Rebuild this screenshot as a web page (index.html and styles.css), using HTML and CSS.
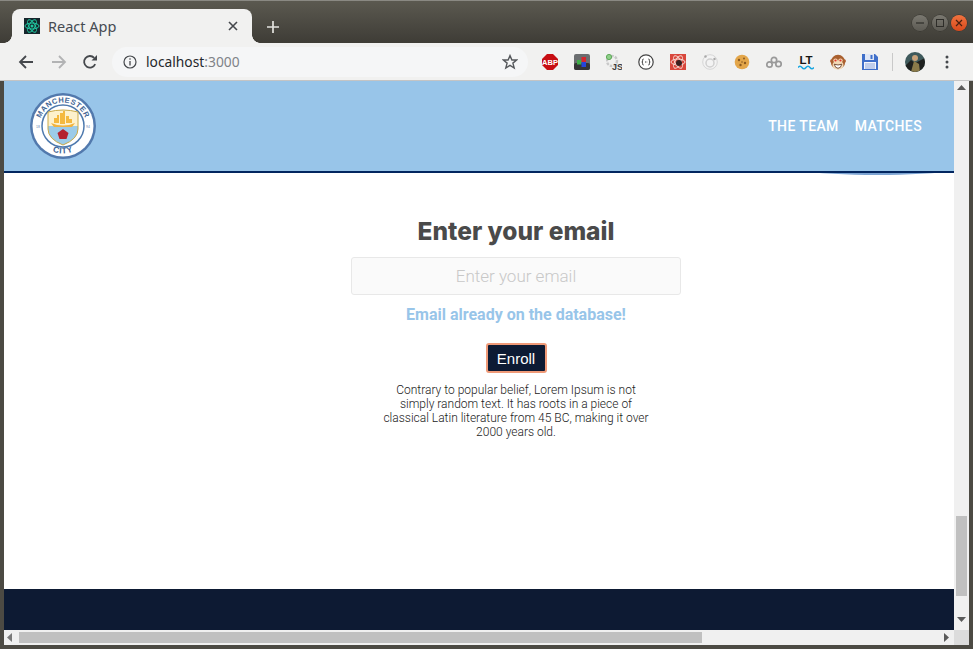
FILE: index.html
```html
<!DOCTYPE html>
<html lang="en">
<head>
<meta charset="utf-8">
<title>React App</title>
<link rel="stylesheet" href="styles.css">
</head>
<body>
<div class="window">
  <div class="titlebar">
    <div class="tab">
      <svg class="favicon" width="16" height="16" viewBox="0 0 16 16"><rect width="16" height="16" fill="#16262c"/><g fill="none" stroke="#1fc7a0" stroke-width="1"><ellipse cx="8" cy="8" rx="7" ry="3"/><ellipse cx="8" cy="8" rx="7" ry="3" transform="rotate(60 8 8)"/><ellipse cx="8" cy="8" rx="7" ry="3" transform="rotate(120 8 8)"/></g><circle cx="8" cy="8" r="1.5" fill="#1fc7a0"/></svg>
      <span class="tab-title">React App</span>
      <svg class="tab-close" width="10" height="10" viewBox="0 0 10 10"><path d="M1 1L9 9M9 1L1 9" stroke="#45484c" stroke-width="1.6"/></svg>
    </div>
    <svg class="new-tab" width="12" height="12" viewBox="0 0 12 12"><path d="M6 0V12M0 6H12" stroke="#e4e3df" stroke-width="1.7"/></svg>
    <div class="win-buttons">
      <span class="win-btn"><svg width="16" height="16" viewBox="0 0 16 16"><path d="M4 8H12" stroke="#2e2d29" stroke-width="1.2"/></svg></span>
      <span class="win-btn"><svg width="16" height="16" viewBox="0 0 16 16"><rect x="4.5" y="4.5" width="7" height="7" fill="none" stroke="#2e2d29"/></svg></span>
      <span class="win-btn win-close"><svg width="16" height="16" viewBox="0 0 16 16"><path d="M5 5L11 11M11 5L5 11" stroke="#4a2010" stroke-width="1.2"/></svg></span>
    </div>
  </div>

  <div class="toolbar">
    <svg class="nav-icon nav-back" width="16" height="16" viewBox="0 0 16 16"><path d="M15 8H2M8 2L2 8L8 14" fill="none" stroke="#45484c" stroke-width="1.8"/></svg>
    <svg class="nav-icon nav-forward" width="16" height="16" viewBox="0 0 16 16"><path d="M1 8H14M8 2L14 8L8 14" fill="none" stroke="#b2b3b4" stroke-width="1.8"/></svg>
    <svg class="nav-icon" width="16" height="16" viewBox="0 0 16 16"><path d="M13.2 10.2A5.8 5.8 0 1 1 12.2 3.9" fill="none" stroke="#45484c" stroke-width="1.8"/><path d="M9.5 6.6H15V1Z" fill="#45484c"/></svg>
    <div class="omnibox">
      <svg class="info" width="14" height="14" viewBox="0 0 14 14"><circle cx="7" cy="7" r="6" fill="none" stroke="#45484c" stroke-width="1.2"/><path d="M7 6V10.5" stroke="#45484c" stroke-width="1.3"/><circle cx="7" cy="4" r=".8" fill="#45484c"/></svg>
      <span class="url">localhost<span class="port">:3000</span></span>
      <svg class="star" width="16" height="16" viewBox="0 0 16 16"><path d="M8 1.6L9.9 6H14.7L10.9 9.1L12.2 14L8 11.3L3.8 14L5.1 9.1L1.3 6H6.1Z" fill="none" stroke="#55585c" stroke-width="1.4"/></svg>
    </div>
    <div class="extensions">
      <svg width="16" height="16" viewBox="0 0 16 16"><path d="M5 0H11L16 5V11L11 16H5L0 11V5Z" fill="#c70d12"/><text x="8" y="10.8" class="abp">ABP</text></svg>
      <svg width="16" height="16" viewBox="0 0 16 16"><rect width="16" height="16" rx="2" fill="#6b6e70"/><rect y="9" width="16" height="7" rx="2" fill="#343536"/><rect x="3" y="6" width="4.500" height="4.500" fill="#3fae48"/><rect x="7.500" y="3" width="4.500" height="5" fill="#d8262c"/><rect x="7.500" y="8" width="4.500" height="5" fill="#2546d8"/></svg>
      <svg width="16" height="16" viewBox="0 0 16 16"><circle cx="6" cy="7" r="5" fill="none" stroke="#c8c8c8" stroke-width="2.4" stroke-dasharray="2.5 1.2"/><circle cx="3" cy="3" r="2.6" fill="#8fd08a" stroke="#5da858"/><text x="11.500" y="15.500" class="js">JS</text></svg>
      <svg width="16" height="16" viewBox="0 0 16 16"><circle cx="8" cy="8" r="7.2" fill="#fff" stroke="#444" stroke-width="1.2"/><path d="M5.6 5Q4.4 5 4.6 6.5T3.8 8Q4.8 8 4.6 9.5T5.6 11M10.4 5Q11.6 5 11.4 6.5T12.2 8Q11.2 8 11.4 9.5T10.4 11" fill="none" stroke="#333"/><path d="M7 8H9.2" stroke="#333" stroke-dasharray="1 .6"/></svg>
      <svg width="16" height="16" viewBox="0 0 16 16"><rect width="16" height="16" fill="#d9473c"/><g fill="none" stroke="#f6d6d0" stroke-width="1"><ellipse cx="8" cy="8" rx="7" ry="3"/><ellipse cx="8" cy="8" rx="7" ry="3" transform="rotate(60 8 8)"/><ellipse cx="8" cy="8" rx="7" ry="3" transform="rotate(120 8 8)"/></g><circle cx="9" cy="9" r="3" fill="#3a2020"/></svg>
      <svg width="16" height="16" viewBox="0 0 16 16"><circle cx="8" cy="8" r="7.3" fill="#f3f3f3" stroke="#d6d6d6"/><circle cx="8" cy="9" r="4" fill="none" stroke="#d0d0d0" stroke-width="1.5"/><circle cx="3.5" cy="2.5" r="1.2" fill="#a8a8a8"/><circle cx="12.5" cy="5" r="1.2" fill="#a8a8a8"/></svg>
      <svg width="16" height="16" viewBox="0 0 16 16"><circle cx="8" cy="8" r="7.3" fill="#e3a64a"/><circle cx="5" cy="6" r="1.2" fill="#8a5a20"/><circle cx="10" cy="4.5" r="1" fill="#8a5a20"/><circle cx="11" cy="9" r="1.2" fill="#8a5a20"/><circle cx="6.5" cy="11" r="1.2" fill="#8a5a20"/><circle cx="8" cy="8" r=".8" fill="#8a5a20"/></svg>
      <svg width="16" height="16" viewBox="0 0 16 16"><g fill="none" stroke="#9a9a9a" stroke-width="1.7"><circle cx="3.500" cy="10.500" r="2.700"/><circle cx="8" cy="6" r="2.700"/><circle cx="12.500" cy="10" r="2.700"/></g></svg>
      <svg width="16" height="16" viewBox="0 0 16 16"><text x="8" y="9.800" class="lt">LT</text><path d="M0 13.500Q2 11 4 13.500T8 13.500T12 13.500T16 13.500" fill="none" stroke="#18a6e0" stroke-width="1.5"/></svg>
      <svg width="16" height="16" viewBox="0 0 16 16"><circle cx="1.800" cy="7" r="1.800" fill="#b8683a"/><circle cx="14.200" cy="7" r="1.800" fill="#b8683a"/><circle cx="8" cy="8" r="7.200" fill="#a9602f"/><ellipse cx="8" cy="11" rx="5.500" ry="4.500" fill="#f3d9b6"/><ellipse cx="5.500" cy="6.500" rx="2.200" ry="1.900" fill="#f3d9b6"/><ellipse cx="10.500" cy="6.500" rx="2.200" ry="1.900" fill="#f3d9b6"/><circle cx="5.500" cy="6.500" r="1.100" fill="#e5352c"/><circle cx="10.500" cy="6.500" r="1.100" fill="#e5352c"/><path d="M4.200 10.200Q8 11.800 11.800 10.200Q10.800 14.300 8 14.300T4.200 10.200Z" fill="#fff" stroke="#5a2e16" stroke-width=".8"/></svg>
      <svg width="16" height="16" viewBox="0 0 16 16"><path d="M0 0H13L16 3V16H0Z" fill="#3f6fc9"/><rect x="3" y="0" width="9" height="6" fill="#dfe7f6"/><rect x="8.500" y="1" width="2" height="4" fill="#3f6fc9"/><rect x="2" y="8" width="12" height="7" fill="#f4f6fb"/><path d="M3 10H13M3 12H13M3 14H13" stroke="#8aa5dc"/></svg>
    </div>
    <span class="separator"></span>
    <svg class="avatar" width="20" height="20" viewBox="0 0 20 20"><clipPath id="av"><circle cx="10" cy="10" r="10"/></clipPath><g clip-path="url(#av)"><rect width="20" height="20" fill="#3f5a5c"/><path d="M0 14L6 8L10 11L20 6V20H0Z" fill="#1f2120"/><circle cx="10" cy="6" r="3" fill="#c9a27a"/><path d="M6 20L9 9L14 12L15 20Z" fill="#8a7a4a"/></g></svg>
    <svg class="menu" width="4" height="14" viewBox="0 0 4 14"><circle cx="2" cy="2" r="1.500" fill="#45484c"/><circle cx="2" cy="7" r="1.500" fill="#45484c"/><circle cx="2" cy="12" r="1.500" fill="#45484c"/></svg>
  </div>

  <div class="viewport">
    <div class="page">
      <div class="page-main">
        <span class="header-glow"></span>
        <header class="header">
          <svg class="logo" width="66" height="66" viewBox="0 0 66 66">
            <defs>
              <path id="arcTop" d="M9.500 33A23.500 23.500 0 0 1 56.500 33"/>
              <path id="arcBottom" d="M5.500 33A27.500 27.500 0 0 0 60.500 33"/>
              <clipPath id="shield"><path d="M18 19Q33 15 48 19V36Q48 46 33 52Q18 46 18 36Z"/></clipPath>
            </defs>
            <circle cx="33" cy="33" r="33" fill="#5279ad"/>
            <circle cx="33" cy="33" r="30.500" fill="#fff"/>
            <text class="logo-text"><textPath href="#arcTop" startOffset="50%">MANCHESTER</textPath></text>
            <text class="logo-text logo-city"><textPath href="#arcBottom" startOffset="50%">CITY</textPath></text>
            <circle cx="33" cy="33" r="21" fill="#fff" stroke="#4f7aae" stroke-width="1.500"/>
            <text class="logo-year" x="8" y="35">18</text>
            <text class="logo-year" x="58" y="35">94</text>
            <g clip-path="url(#shield)">
              <rect x="17" y="15" width="32" height="20" fill="#fdf1cc"/>
              <rect x="17" y="33" width="32" height="21" fill="#9ccbe8"/>
              <path d="M21 30Q33 35 45 30L42 34H24Z" fill="#f1b33e"/>
              <path d="M24 30V25H27V22H29V30ZM30 31V20H33V18H35V31ZM36 30V23H39V26H42V30Z" fill="#f4b93f"/>
              <path d="M33 36L38.500 40L36.500 46H29.500L27.500 40Z" fill="#b4202f"/>
            </g>
            <path d="M18 19Q33 15 48 19V36Q48 46 33 52Q18 46 18 36Z" fill="none" stroke="#c9a949" stroke-width="1"/>
          </svg>
          <nav class="nav">
            <a class="nav-link">THE TEAM</a>
            <a class="nav-link">MATCHES</a>
          </nav>
        </header>
        <main class="enroll">
          <h1 class="enroll-title">Enter your email</h1>
          <input class="enroll-input" type="text" placeholder="Enter your email">
          <p class="enroll-error">Email already on the database!</p>
          <button class="enroll-button">Enroll</button>
          <p class="enroll-copy">Contrary to popular belief, Lorem Ipsum is not simply random text. It has roots in a piece of classical Latin literature from 45 BC, making it over 2000 years old.</p>
        </main>
      </div>
      <footer class="footer"></footer>
      <div class="hscroll">
        <svg width="5" height="9" viewBox="0 0 5 9"><path d="M5 0V9L0 4.500Z" fill="#7a7a7a"/></svg>
        <span class="hthumb"></span>
        <svg class="hright" width="5" height="9" viewBox="0 0 5 9"><path d="M0 0V9L5 4.500Z" fill="#5a5a5a"/></svg>
      </div>
    </div>
    <div class="vscroll">
      <svg width="9" height="5" viewBox="0 0 9 5"><path d="M0 5H9L4.500 0Z" fill="#5a5a5a"/></svg>
      <span class="vthumb"></span>
      <svg width="9" height="5" viewBox="0 0 9 5"><path d="M0 0H9L4.500 5Z" fill="#5a5a5a"/></svg>
      <span class="corner"></span>
    </div>
  </div>
</div>
</body>
</html>
```

FILE: styles.css
```css
* { box-sizing: border-box; }
html, body { margin: 0; padding: 0; overflow: hidden; }
body { width: 973px; height: 649px; background: #4c4a43; }

.window {
  width: 973px;
  height: 649px;
  display: flex;
  flex-direction: column;
  padding: 0 4px 4px 4px;
  border-top: 1px solid #8a8983;
  background: #4c4a43;
}

/* Title bar */
.titlebar {
  height: 42px;
  margin: 0 -4px;
  padding: 8px 4px 0 12px;
  display: flex;
  background: linear-gradient(#5b5950, #3e3c36);
  flex: none;
}
.tab {
  position: relative;
  width: 240px;
  height: 34px;
  padding: 0 14px 0 12px;
  display: flex;
  align-items: center;
  background: #f1f1f0;
  border-radius: 8px 8px 0 0;
}
.tab::before, .tab::after {
  content: "";
  position: absolute;
  bottom: 0;
  width: 8px;
  height: 8px;
}
.tab::before { left: -8px; background: radial-gradient(circle at 0 0, transparent 7.500px, #f1f1f0 8px); }
.tab::after { right: -8px; background: radial-gradient(circle at 100% 0, transparent 7.500px, #f1f1f0 8px); }
.favicon { flex: none; }
.tab-title {
  margin-left: 8px;
  flex: 1;
  font: 14.500px/20px "Noto Sans", sans-serif;
  color: #464b52;
}
.tab-close { flex: none; }
.new-tab { margin: 12px 0 0 15px; flex: none; }
.win-buttons {
  margin: 6px 0 0 auto;
  padding-right: 2px;
  display: flex;
  gap: 3.500px;
  height: 16px;
}
.win-btn {
  width: 16px;
  height: 16px;
  border-radius: 50%;
  background: linear-gradient(#7a7870, #5c5a53);
  box-shadow: 0 0 0 .5px #33322d;
  display: block;
}
.win-btn svg { display: block; }
.win-close { background: linear-gradient(#f0733f, #d9491c); }

/* Toolbar */
.toolbar {
  height: 38px;
  margin: 0 -4px;
  padding: 0 0 0 18px;
  display: flex;
  align-items: center;
  background: #f1f1f0;
  border-bottom: 1px solid #c4c4c4;
  flex: none;
}
.nav-icon { flex: none; margin-right: 17px; }
.nav-forward { margin-right: 15px; }
.omnibox {
  width: 416px;
  height: 30px;
  margin-left: -3px;
  padding: 0 10px 0 11px;
  display: flex;
  align-items: center;
  background: #f5f6f7;
  border-radius: 15px;
  flex: none;
}
.info { flex: none; }
.url {
  margin-left: 9px;
  flex: 1;
  font: 13.800px/20px "Noto Sans", sans-serif;
  color: #24282c;
}
.port { color: #7f8388; }
.extensions {
  margin-left: 14px;
  display: flex;
  gap: 16px;
  flex: none;
}
.extensions svg { display: block; }
.abp { font: 700 7.500px "Liberation Sans", sans-serif; fill: #fff; text-anchor: middle; }
.js { font: 700 9px "Liberation Sans", sans-serif; fill: #3c3c3c; text-anchor: middle; }
.lt { font: 700 11.500px "Liberation Sans", sans-serif; fill: #161616; text-anchor: middle; }
.separator { width: 1px; height: 18px; margin-left: 14px; background: #c9c9c9; flex: none; }
.avatar { margin-left: 12px; flex: none; }
.menu { margin-left: 20px; flex: none; }

/* Page viewport */
.viewport {
  flex: 1;
  min-height: 0;
  display: flex;
  background: #fff;
}
.page {
  width: 950px;
  display: flex;
  flex-direction: column;
  flex: none;
}
.page-main {
  position: relative;
  flex: 1;
  min-height: 0;
  overflow: hidden;
}
.header {
  position: relative;
  height: 92px;
  padding: 12px 32px 0 26px;
  display: flex;
  justify-content: space-between;
  align-items: flex-start;
  background: #98c5e9;
  border-bottom: 2px solid #02265f;
}
.logo { display: block; flex: none; }
.logo-text { font: 700 7.500px "Liberation Sans", sans-serif; fill: #3f6494; text-anchor: middle; letter-spacing: .5px; }
.logo-city { font-size: 8.500px; }
.logo-year { font: 400 3.500px "Liberation Sans", sans-serif; fill: #5f86b3; text-anchor: middle; }
.nav { display: flex; gap: 16px; margin-top: 23px; }
.nav-link {
  font: 500 14px/20px Roboto, sans-serif;
  letter-spacing: .38px;
  color: #fff;
}
.header-glow {
  position: absolute;
  left: 758px;
  top: 64px;
  width: 230px;
  height: 30px;
  border-radius: 50%;
  background: #7ba3d2;
}

/* Form */
.enroll {
  width: 330px;
  margin-left: 347px;
  padding-top: 42px;
  display: flex;
  flex-direction: column;
  align-items: center;
}
.enroll-title {
  margin: 0;
  font: 800 24.500px/32px Inter, sans-serif;
  color: #4a4a4a;
}
.enroll-input {
  width: 330px;
  height: 38px;
  margin-top: 10px;
  padding: 0;
  text-align: center;
  font: 300 17px Roboto, sans-serif;
  background: #fafafa;
  border: 1px solid #e8e8e8;
  border-radius: 3px;
  outline: none;
}
.enroll-input::placeholder { color: #c8c8c8; opacity: 1; }
.enroll-error {
  margin: 10px 0 0;
  font: 700 16px/20px Roboto, sans-serif;
  color: #98c5e9;
}
.enroll-button {
  width: 61px;
  height: 30px;
  margin-top: 18px;
  padding: 0;
  font: 400 15px "Liberation Sans", sans-serif;
  color: #fff;
  background: #0d1a33;
  border: 2px solid #ef9a78;
  border-radius: 3px;
}
.enroll-copy {
  width: 270px;
  margin: 10px 0 0;
  font: 300 12px/14px Roboto, sans-serif;
  text-align: center;
  color: #222;
}

.footer { height: 41px; background: #0d1a33; flex: none; }

/* Scrollbars */
.hscroll {
  height: 15px;
  padding: 0 5px 0 3px;
  display: flex;
  align-items: center;
  background: #f0f0f0;
  flex: none;
}
.hthumb { width: 683px; height: 11px; margin-left: 7px; background: #c0c0c0; }
.hright { margin-left: auto; }
.vscroll {
  width: 15px;
  padding-top: 4px;
  display: flex;
  flex-direction: column;
  align-items: center;
  background: #f0f0f0;
  flex: none;
}
.vthumb { width: 11px; height: 80px; margin-top: 426px; background: #c0c0c0; }
.vscroll svg:last-of-type { margin-top: 21px; }
.corner { width: 15px; height: 15px; margin-top: auto; background: #dcdcdc; }
```
